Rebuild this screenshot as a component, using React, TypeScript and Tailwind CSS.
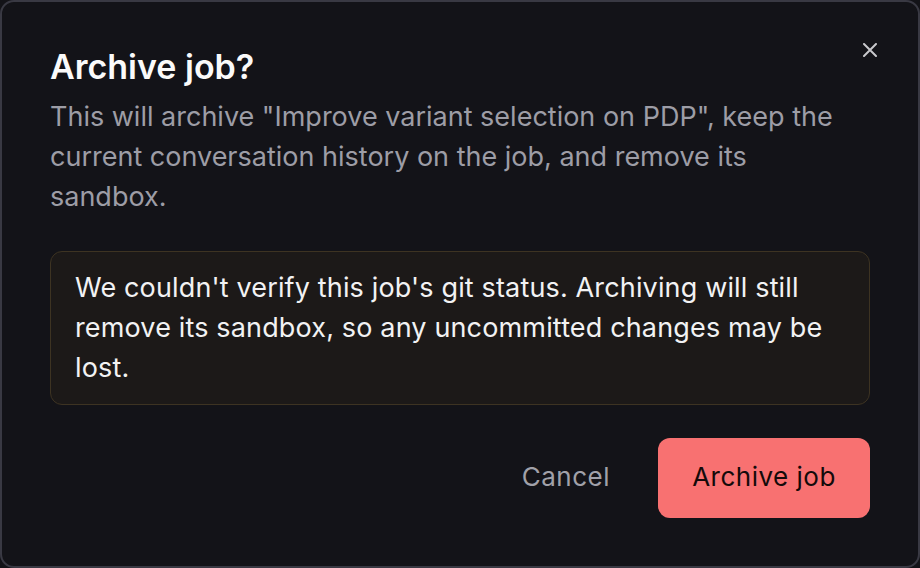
import React from "react";

export default function App() {
  return (
    <div className="w-[920px] h-[568px] bg-[#131318]" style={{ fontFamily: "Inter, 'Noto Sans', sans-serif" }}>
      <div className="relative w-full h-full rounded-[14px] border-2 border-[#393943] bg-[#131318] px-[48px] pt-[45px] pb-[48px] flex flex-col">
        <button className="absolute right-[41px] top-[41px] w-[14px] h-[14px] flex items-center justify-center text-[#c8c8cc]">
          <svg width="14" height="14" viewBox="0 0 14 14" fill="none" stroke="currentColor" strokeWidth="2" strokeLinecap="round">
            <path d="M1 1L13 13M13 1L1 13" />
          </svg>
        </button>
        <h2 className="text-[34px] leading-[40px] font-semibold text-[#fafafa]">Archive job?</h2>
        <p className="mt-[10px] text-[27px] leading-[40px] text-[#9d9da6] pr-[8px]">
          This will archive "Improve variant selection on PDP", keep the current conversation history on the job, and remove its sandbox.
        </p>
        <div className="mt-[34px] rounded-[12px] border border-[#3d3322] bg-[#1c1918] px-[24px] py-[16px] text-[27px] leading-[40px] tracking-[0.15px] text-[#f2f2f3]">
          We couldn't verify this job's git status. Archiving will still remove its sandbox, so any uncommitted changes may be lost.
        </div>
        <div className="mt-[33px] flex items-center justify-end gap-[24px]">
          <button className="h-[80px] px-[24px] pb-[3px] text-[26px] tracking-[0.5px] text-[#a1a1a9]">Cancel</button>
          <button className="h-[80px] w-[212px] pb-[3px] rounded-[12px] bg-[#f87171] text-[26px] tracking-[0.5px] text-[#140a0a]">Archive job</button>
        </div>
      </div>
    </div>
  );
}
